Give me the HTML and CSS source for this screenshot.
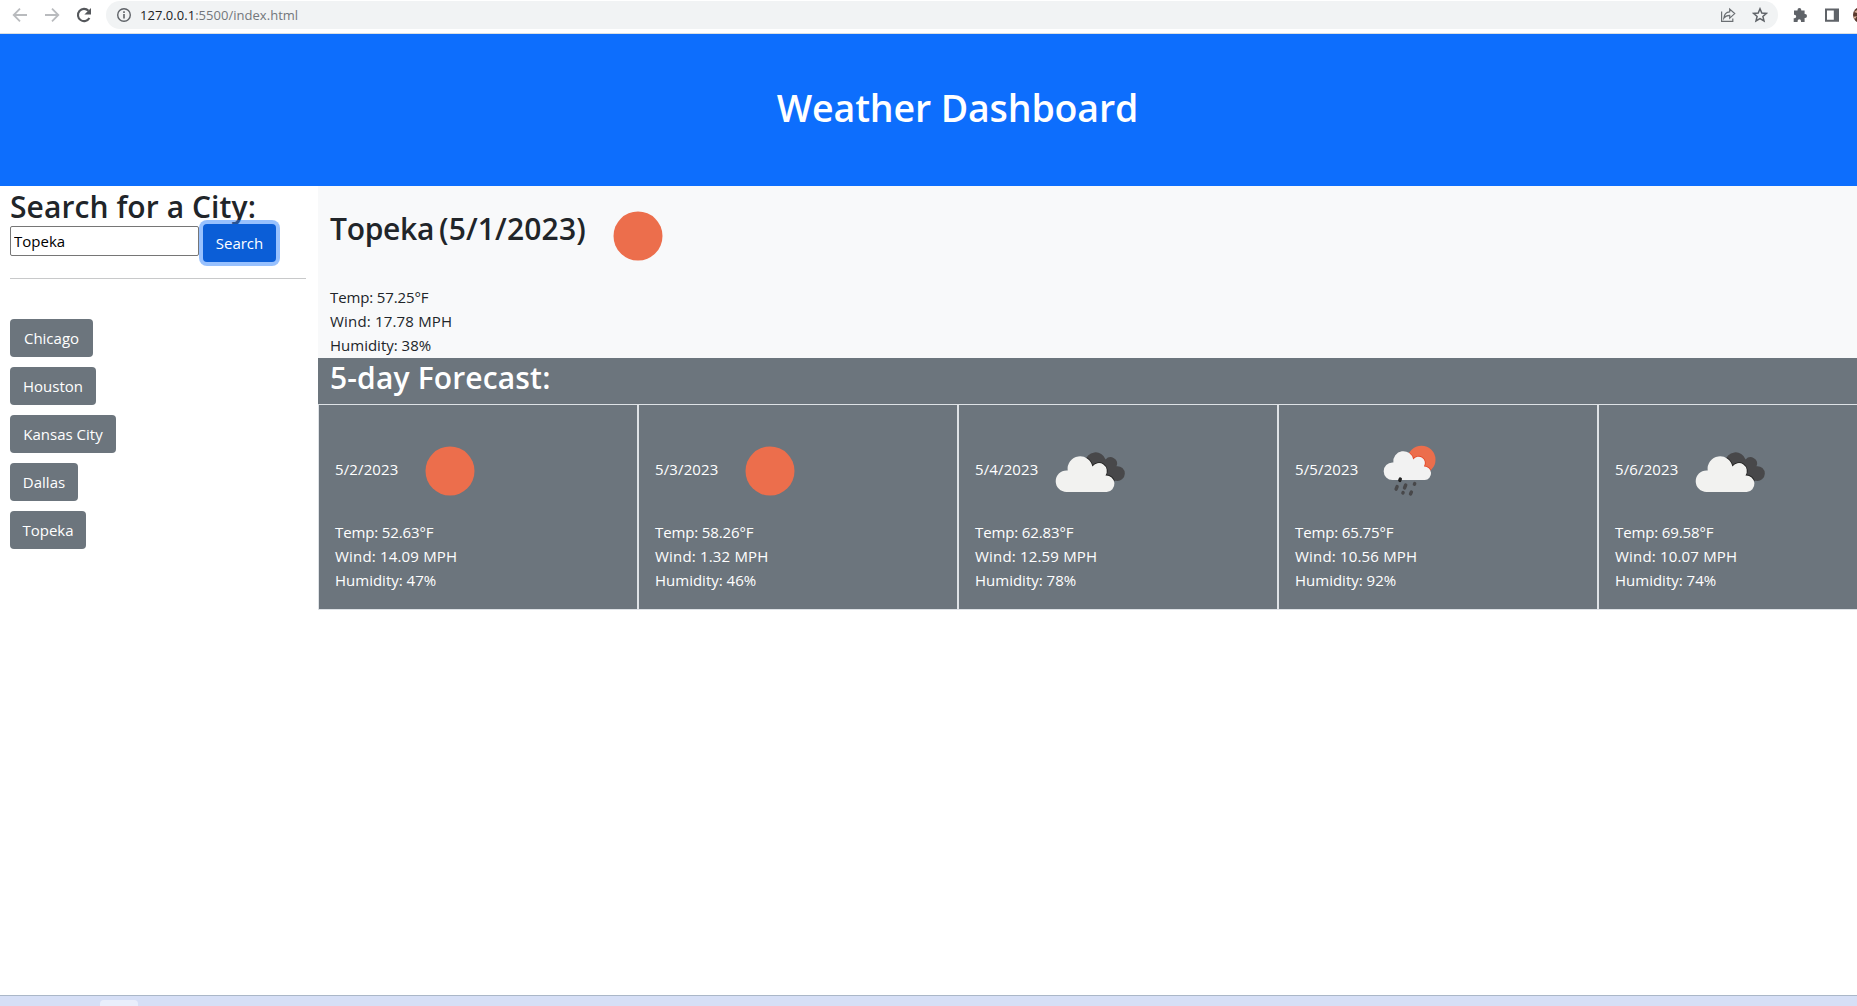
FILE: index.html
```html
<!DOCTYPE html>
<html lang="en">
<head>
<meta charset="utf-8">
<title>Weather Dashboard</title>
<link rel="stylesheet" href="styles.css">
</head>
<body>
<svg class="defs" width="0" height="0">
  <defs>
    <path id="cloud" d="M26.5 71a10.8 10.8 0 0 1 0-21.6h1.2A12.5 12.5 0 0 1 52.4 45.6 7.5 7.5 0 0 1 65.5 54.4A8.3 8.3 0 0 1 66.7 71Z"/>
    <path id="darkcloud" d="M45.2 41A10.5 10.5 0 0 1 65.6 38.4 6.5 6.5 0 0 1 76.5 45.2 7.4 7.4 0 1 1 76 59.8H66L45 47Z"/>
    <clipPath id="darkclip"><use href="#darkcloud"/></clipPath>
    <clipPath id="sunclip"><circle cx="61.5" cy="38.7" r="14"/></clipPath>
    <symbol id="sun" viewBox="0 0 100 100"><circle cx="50" cy="50" r="24.5" fill="#ec6e4c"/></symbol>
    <symbol id="clouds" viewBox="0 0 100 100">
      <use href="#darkcloud" fill="#48484a"/>
      <use href="#cloud" fill="#fff" stroke="#222" stroke-width="1.6" clip-path="url(#darkclip)"/>
      <use href="#cloud" fill="#f2f2f0"/>
    </symbol>
    <symbol id="rain" viewBox="0 0 100 100">
      <circle cx="61.5" cy="38.7" r="14" fill="#ec6e4c"/>
      <g clip-path="url(#sunclip)"><use href="#cloud" transform="translate(11 1.7) scale(.807)" fill="none" stroke="#e44b2c" stroke-width="2"/></g>
      <use href="#cloud" transform="translate(11 1.7) scale(.807)" fill="#f2f2f2"/>
      <g stroke="#48484a" stroke-width="3.4" stroke-linecap="round">
        <path d="M40.3 58l-.5 1.4" stroke="#222"/>
        <path d="M37.1 65.6l-1 2.6M45.7 64l-1.2 3M54.7 62.6l-.3.7M43.1 71.6l-.2.4M51.4 71l-.9 2"/>
      </g>
    </symbol>
  </defs>
</svg>

<div class="browser">
  <div class="nav">
    <svg width="16" height="16" viewBox="0 0 16 16" fill="none" stroke="#b9bbbe" stroke-width="1.8"><path d="M15 8H2M8 1.700L1.700 8 8 14.300"/></svg>
    <svg width="16" height="16" viewBox="0 0 16 16" fill="none" stroke="#b9bbbe" stroke-width="1.800"><path d="M1 8h13M8 1.700L14.300 8 8 14.300"/></svg>
    <svg width="16" height="16" viewBox="0 0 16 16"><path d="M13.400 11A6.100 6.100 0 1 1 12.500 3.800" fill="none" stroke="#54575b" stroke-width="2.100"/><path d="M15 1v6.600H8.400z" fill="#54575b"/></svg>
  </div>
  <div class="address">
    <svg width="16" height="16" viewBox="0 0 16 16"><circle cx="8" cy="8" r="6.300" fill="none" stroke="#5f6368" stroke-width="1.400"/><path d="M7.200 7h1.600v4.500H7.200zM7.200 4.300h1.600v1.600H7.200z" fill="#5f6368"/></svg>
    <span class="url"><b>127.0.0.1</b>:5500/index.html</span>
    <svg class="share" width="16" height="16" viewBox="0 0 16 16" fill="none" stroke="#6b6f73" stroke-width="1.200"><path d="M1.600 4.500v9.900h11.200v-3M3.800 11.200C4.200 7 6 5 9.700 4.800V2l5 4.600-5 4.500V8.400c-2.900 0-4.500.8-5.900 2.800z"/></svg>
    <svg width="16" height="16" viewBox="0 0 16 16" fill="none" stroke="#5f6368" stroke-width="1.500"><path d="M8 1.800l1.800 4.200 4.600.4-3.500 3 1.100 4.500L8 11.500l-4 2.400 1.100-4.500-3.500-3L6.200 6z"/></svg>
  </div>
  <div class="tools">
    <svg width="16" height="16" viewBox="0 0 16 16" fill="#5f6368"><path d="M2 3.500h3.500V3a1.900 1.900 0 0 1 3.800 0v.5h3.300v3.600h.5a1.900 1.900 0 0 1 0 3.800h-.5v4H9V14a1.700 1.700 0 0 0-3.400 0v.9H1.700v-3.600h.7a1.800 1.800 0 0 0 0-3.600H2z"/></svg>
    <svg width="16" height="16" viewBox="0 0 16 16"><path fill="#5f6368" fill-rule="evenodd" d="M1 1.500h14v13.200H1zM3 3.500h6.800v9.200H3z"/></svg>
    <svg class="avatar" width="16" height="16" viewBox="0 0 16 16"><circle cx="8" cy="8" r="8" fill="#59392d"/><path d="M1 5l3-2v3zM0 10l4-1-2 3z" fill="#d9b19b"/></svg>
  </div>
</div>

<div class="page">
  <header class="banner"><h1>Weather Dashboard</h1></header>
  <div class="columns">
    <aside class="sidebar">
      <h2 class="search-title">Search for a City:</h2>
      <form class="search">
        <input type="text" value="Topeka">
        <button class="btn primary" type="button">Search</button>
      </form>
      <hr>
      <div class="history">
        <button class="btn w-chicago">Chicago</button>
        <button class="btn w-houston">Houston</button>
        <button class="btn w-kansas">Kansas City</button>
        <button class="btn w-dallas">Dallas</button>
        <button class="btn w-topeka">Topeka</button>
      </div>
    </aside>
    <main>
      <section class="today">
        <div class="today-head">
          <h2 class="city">Topeka</h2><h2 class="date">(5/1/2023)</h2>
          <svg class="icon"><use href="#sun"/></svg>
        </div>
        <p class="temp">Temp: 57.25°F</p><p class="wind">Wind: 17.78 MPH</p><p>Humidity: 38%</p>
      </section>
      <h2 class="forecast-title">5-day Forecast:</h2>
      <section class="forecast">
        <article class="card"><div class="card-head"><span>5/2/2023</span><svg class="icon"><use href="#sun"/></svg></div><p class="temp">Temp: 52.63°F</p><p class="wind">Wind: 14.09 MPH</p><p>Humidity: 47%</p></article>
        <article class="card"><div class="card-head"><span>5/3/2023</span><svg class="icon"><use href="#sun"/></svg></div><p class="temp">Temp: 58.26°F</p><p class="wind">Wind: 1.32 MPH</p><p>Humidity: 46%</p></article>
        <article class="card"><div class="card-head"><span>5/4/2023</span><svg class="icon"><use href="#clouds"/></svg></div><p class="temp">Temp: 62.83°F</p><p class="wind">Wind: 12.59 MPH</p><p>Humidity: 78%</p></article>
        <article class="card"><div class="card-head"><span>5/5/2023</span><svg class="icon"><use href="#rain"/></svg></div><p class="temp">Temp: 65.75°F</p><p class="wind">Wind: 10.56 MPH</p><p>Humidity: 92%</p></article>
        <article class="card"><div class="card-head"><span>5/6/2023</span><svg class="icon"><use href="#clouds"/></svg></div><p class="temp">Temp: 69.58°F</p><p class="wind">Wind: 10.07 MPH</p><p>Humidity: 74%</p></article>
      </section>
    </main>
  </div>
</div>
<div class="taskbar"><div class="task"></div></div>
</body>
</html>
```
FILE: styles.css
```css
* { box-sizing: border-box; }
body {
  margin: 0;
  height: 1006px;
  display: flex;
  flex-direction: column;
  overflow: hidden;
  background: #fff;
  color: #212529;
  font: 15px/24px "Open Sans", "Noto Sans", sans-serif;
}
h1, h2, p { margin: 0; }
h2 { font-size: 30px; font-weight: 600; line-height: 38px; }
svg { display: block; flex: none; }
.defs { position: absolute; }

.browser {
  height: 34px;
  flex: none;
  display: flex;
  padding: 1px 0 4px 12px;
  border-bottom: 1px solid #d9dfe3;
}
.nav { display: flex; gap: 16px; align-items: center; width: 94px; flex: none; }
.address {
  width: 1672px;
  height: 28px;
  flex: none;
  display: flex;
  align-items: center;
  padding: 0 10px;
  border-radius: 14px;
  background: #f1f3f4;
}
.url { margin-left: 8px; font-size: 13px; line-height: 28px; letter-spacing: .03px; color: #73777b; }
.url b { font-weight: 400; color: #202124; }
.share { margin-left: auto; margin-right: 16px; }
.tools { display: flex; gap: 16px; align-items: center; padding-left: 14px; }
.avatar { margin-left: -3px; }

.page { width: 1918px; flex: 1; }
.banner { height: 152px; padding: 50px 3px 0 0; background: #0d6efd; text-align: center; }
.banner h1 { color: #fff; font-size: 37.5px; line-height: 48px; font-weight: 600; letter-spacing: -.14px; }
.columns { display: flex; align-items: flex-start; }

.sidebar { width: 318px; flex: none; padding: 2px 12px 0 10px; }
.search-title { margin-bottom: -2px; letter-spacing: .08px; }
.search { display: flex; align-items: flex-start; height: 38px; }
.search input {
  width: 189px;
  height: 30px;
  margin: 2px 4px 0 0;
  padding: 1px 3px;
  border: 1px solid #767676;
  border-radius: 2px;
  background: #fff;
  color: #000;
  font: inherit;
}
.btn {
  height: 38px;
  padding: 0 0 1px;
  border: 0;
  border-radius: 4px;
  background: #6c757d;
  color: #fff;
  font: inherit;
}
.primary { width: 73px; background: #0b5ed7; box-shadow: 0 0 0 4px rgba(49, 132, 253, .5); }
hr { height: 1px; margin: 16px 0 40px; border: 0; background: #c8c9ca; }
.history { display: flex; flex-direction: column; align-items: flex-start; gap: 10px; }
.w-chicago { width: 83px; }
.w-houston { width: 86px; }
.w-kansas { width: 106px; }
.w-dallas { width: 68px; }
.w-topeka { width: 76px; }

main { width: 1600px; flex: none; }
.today { height: 172px; padding-left: 12px; background: #f8f9fa; }
.today-head { display: flex; height: 99px; }
.today-head h2 { line-height: 85px; }
.city { width: 109px; letter-spacing: -.3px; }
.date { width: 149px; letter-spacing: .15px; }
.icon { width: 100px; height: 100px; }
.temp { letter-spacing: -.12px; }
.wind { letter-spacing: .18px; }
.forecast-title { height: 46px; padding: 1px 0 0 12px; background: #6c757d; color: #fff; letter-spacing: .15px; }
.forecast { display: grid; grid-template-columns: repeat(5, 320px); }
.card { height: 206px; padding: 16px; border: 1px solid #dee2e6; background: #6c757d; color: #fff; }
.card-head { display: flex; align-items: center; height: 99px; }
.card-head span { width: 65px; padding-bottom: 4px; letter-spacing: .12px; }

.taskbar { height: 11px; flex: none; padding: 4px 0 0 100px; border-top: 1px solid #aab7c8; background: #d6dff6; }
.task { width: 38px; height: 6px; border-radius: 4px 4px 0 0; background: #e9eefb; }
```
